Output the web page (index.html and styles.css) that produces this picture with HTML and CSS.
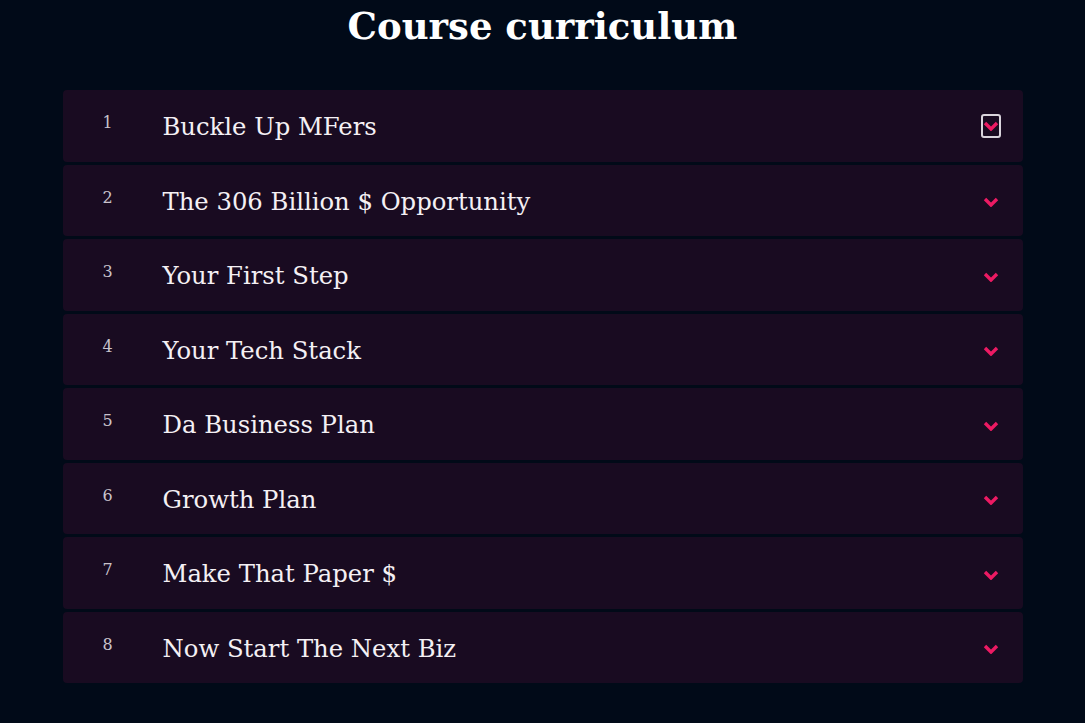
FILE: index.html
```html
<!DOCTYPE html>
<html>
<head>
<meta charset="utf-8">
<link rel="stylesheet" href="styles.css">
</head>
<body>
<section class="curriculum">
  <h1 class="title">Course curriculum</h1>
  <ul class="list">
    <li class="row"><span class="num">1</span><span class="name">Buckle Up MFers</span><span class="toggle focused"><svg viewBox="0 0 16 10" width="16" height="10"><polyline points="2,2 8,8 14,2"/></svg></span></li>
    <li class="row"><span class="num">2</span><span class="name">The 306 Billion $ Opportunity</span><span class="toggle"><svg viewBox="0 0 16 10" width="16" height="10"><polyline points="2,2 8,8 14,2"/></svg></span></li>
    <li class="row"><span class="num">3</span><span class="name">Your First Step</span><span class="toggle"><svg viewBox="0 0 16 10" width="16" height="10"><polyline points="2,2 8,8 14,2"/></svg></span></li>
    <li class="row"><span class="num">4</span><span class="name">Your Tech Stack</span><span class="toggle"><svg viewBox="0 0 16 10" width="16" height="10"><polyline points="2,2 8,8 14,2"/></svg></span></li>
    <li class="row"><span class="num">5</span><span class="name">Da Business Plan</span><span class="toggle"><svg viewBox="0 0 16 10" width="16" height="10"><polyline points="2,2 8,8 14,2"/></svg></span></li>
    <li class="row"><span class="num">6</span><span class="name">Growth Plan</span><span class="toggle"><svg viewBox="0 0 16 10" width="16" height="10"><polyline points="2,2 8,8 14,2"/></svg></span></li>
    <li class="row"><span class="num">7</span><span class="name">Make That Paper $</span><span class="toggle"><svg viewBox="0 0 16 10" width="16" height="10"><polyline points="2,2 8,8 14,2"/></svg></span></li>
    <li class="row"><span class="num">8</span><span class="name">Now Start The Next Biz</span><span class="toggle"><svg viewBox="0 0 16 10" width="16" height="10"><polyline points="2,2 8,8 14,2"/></svg></span></li>
  </ul>
</section>
</body>
</html>
```

FILE: styles.css
```css
html, body {
  margin: 0;
  padding: 0;
  background: #010a18;
  height: 100%;
  overflow: hidden;
}
.curriculum {
  width: 960px;
  margin: 0 auto;
  font-family: "DejaVu Serif", "Liberation Serif", serif;
  color: #ffffff;
}
.title {
  margin: 0;
  padding-top: 2px;
  height: 88px;
  line-height: 48px;
  font-size: 37px;
  font-weight: bold;
  text-align: center;
}
.list {
  list-style: none;
  margin: 0;
  padding: 0;
  display: flex;
  flex-direction: column;
  gap: 3px;
}
.row {
  height: 71.5px;
  background: #190b21;
  border-radius: 4px;
  display: flex;
  align-items: center;
  padding: 0 22px 0 40px;
  box-sizing: border-box;
}
.num {
  width: 60px;
  font-family: "DejaVu Serif", serif;
  font-size: 16px;
  color: #c9c3cc;
  margin-top: -6px;
}
.name {
  flex: 1;
  font-size: 24.3px;
  color: #f4f0f4;
  margin-top: 2px;
}
.toggle {
  width: 20px;
  height: 24px;
  display: flex;
  align-items: center;
  justify-content: center;
  border-radius: 3px;
  box-sizing: border-box;
  margin-top: 4px;
}
.toggle.focused {
  border: 2px solid #d9d4dc;
  margin-top: 0;
}
.toggle svg polyline {
  fill: none;
  stroke: #ec1a63;
  stroke-width: 3.4;
}
```
